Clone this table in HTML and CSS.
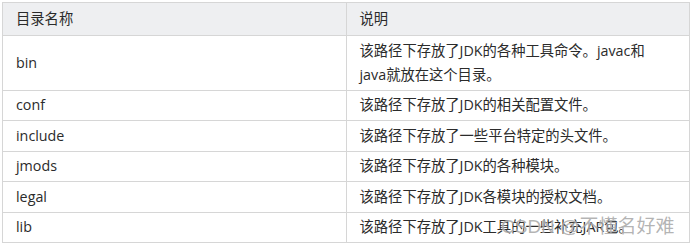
FILE: index.html
```html
<!DOCTYPE html>
<html lang="zh-CN">
<head>
<meta charset="utf-8">
<link rel="stylesheet" href="styles.css">
</head>
<body>
<div class="wrap">
<table class="dirs">
  <thead>
    <tr><th>目录名称</th><th>说明</th></tr>
  </thead>
  <tbody>
    <tr><td>bin</td><td>该路径下存放了JDK的各种工具命令。javac和<br>java就放在这个目录。</td></tr>
    <tr><td>conf</td><td>该路径下存放了JDK的相关配置文件。</td></tr>
    <tr><td>include</td><td>该路径下存放了一些平台特定的头文件。</td></tr>
    <tr><td>jmods</td><td>该路径下存放了JDK的各种模块。</td></tr>
    <tr><td>legal</td><td>该路径下存放了JDK各模块的授权文档。</td></tr>
    <tr><td>lib</td><td>该路径下存放了JDK工具的一些补充JAR包。</td></tr>
  </tbody>
</table>
<div class="watermark">CSDN @不懂名好难</div>
</div>
</body>
</html>
```
FILE: styles.css
```css
html, body {
  margin: 0;
  padding: 0;
  background: #ffffff;
}
.wrap {
  position: relative;
  padding: 2px 0 0 2px;
  width: 688px;
}
.dirs {
  border-collapse: collapse;
  width: 688px;
  table-layout: fixed;
  font-family: "Open Sans", "Noto Sans CJK SC", sans-serif;
  font-size: 14.3px;
  line-height: 24px;
  color: #2b2b2b;
}
.dirs th, .dirs td {
  border: 1px solid #d6d6d6;
  text-align: left;
  vertical-align: middle;
  padding: 2.5px 13px 3px;
  font-weight: normal;
  width: 50%;
}
.dirs th {
  background: #eeeff1;
  padding-top: 4px;
  padding-bottom: 4px;
}
.watermark {
  position: absolute;
  left: 501px;
  top: 215px;
  font-family: "Liberation Sans", "Noto Sans CJK SC", sans-serif;
  font-size: 19px;
  line-height: 24px;
  color: rgba(130, 130, 130, 0.6);
  text-shadow: 0 0 1px rgba(255, 255, 255, 0.8);
  white-space: nowrap;
}
```
